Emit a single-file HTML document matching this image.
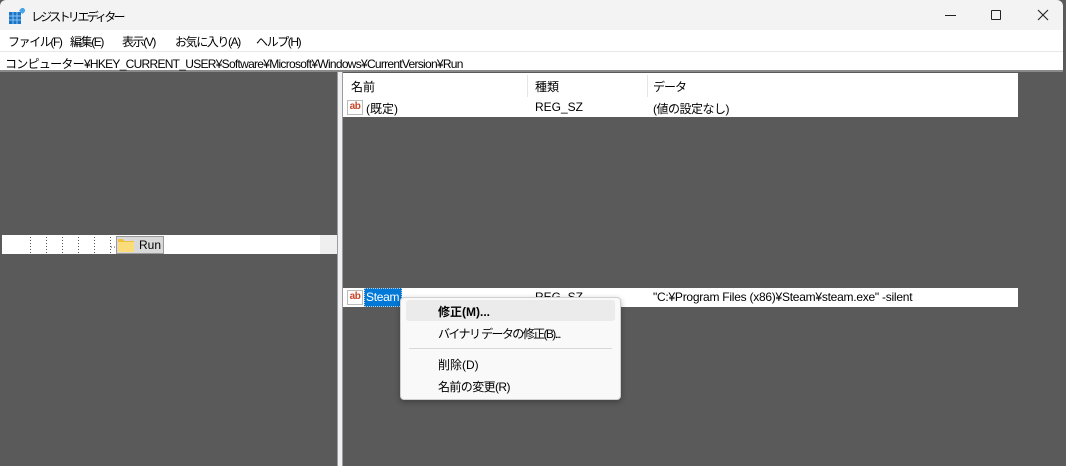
<!DOCTYPE html>
<html><head><meta charset="utf-8"><style>
*{margin:0;padding:0;box-sizing:border-box}
body{width:1066px;height:466px;background:#5a5a5a;position:relative;overflow:hidden;font-family:"Liberation Sans","Noto Sans CJK JP",sans-serif;font-size:12px;color:#000}
.abs{position:absolute}
.title{left:0;top:0;width:1063px;height:30px;background:#f3f3f3;border-top-left-radius:6px;border-top-right-radius:6px}
.menu{left:0;top:30px;width:1063px;height:21px;background:#fff}
.menu span{position:absolute;top:3px;font-size:12px;letter-spacing:-1.4px;white-space:nowrap}
.addr{left:0;top:51px;width:1063px;height:21px;background:#fff;border-top:1px solid #e8e8e8;border-bottom:2px solid #8a8a8a}
.row{background:#fff}
.t{position:absolute;white-space:nowrap}
.ab{position:absolute;width:16px;height:15px;border:1px solid #bbb;background:#fff;color:#c8462a;font-weight:bold;font-size:10px;line-height:12px;text-align:center;letter-spacing:-0.5px}
</style></head><body>
<div class="abs title">
  <svg class="abs" style="left:9px;top:8px" width="16" height="16" viewBox="0 0 16 16">
    <rect x="0" y="4" width="12" height="12" fill="#1a75c9"/>
    <path d="M4 4V16M8 4V16M0 8H12M0 12H12" stroke="#8cc4f0" stroke-width="1"/>
    <rect x="11" y="0" width="5" height="5" fill="#4aa3e8" transform="rotate(45 13.5 2.5)"/>
  </svg>
  <div class="t" style="left:31px;top:8px;font-size:12px;letter-spacing:-2.8px">レジストリ エディター</div>
  <div class="abs" style="left:945px;top:15px;width:11px;height:1px;background:#222"></div>
  <div class="abs" style="left:991px;top:10px;width:10px;height:10px;border:1px solid #222;border-radius:1px"></div>
  <svg class="abs" style="left:1037px;top:9px" width="12" height="12"><path d="M1 1L11 11M11 1L1 11" stroke="#222" stroke-width="1.1"/></svg>
</div>
<div class="abs menu">
  <span style="left:8px">ファイル(F)</span><span style="left:70px">編集(E)</span><span style="left:122px">表示(V)</span><span style="left:175px">お気に入り(A)</span><span style="left:256px">ヘルプ(H)</span>
</div>
<div class="abs addr"><div class="t" style="left:5px;top:3px;letter-spacing:-0.72px">コンピューター¥HKEY_CURRENT_USER¥Software¥Microsoft¥Windows¥CurrentVersion¥Run</div></div>
<!-- splitter -->
<div class="abs" style="left:337px;top:72px;width:6px;height:394px;background:#f0f0f0;border-left:1px solid #9a9aa8;border-right:1px solid #9a9aa8"></div>
<!-- tree row -->
<div class="abs row" style="left:2px;top:235px;width:335px;height:19px"></div>
<div class="abs" style="left:320px;top:235px;width:17px;height:19px;background:#efefef"></div>
<svg class="abs" style="left:0;top:235px" width="120" height="19">
<path d="M30.5 2V19M46.5 2V19M62.5 2V19M78.5 2V19M94.5 2V19M110.5 2V19M111 12H116" stroke="#555" stroke-dasharray="1 2"/>
</svg>
<div class="abs" style="left:116px;top:236px;width:48px;height:18px;background:#d9d9d9;border:1px solid #999"></div>
<svg class="abs" style="left:118px;top:238px" width="16" height="14"><path d="M0 1H5L6.5 3H16V14H0Z" fill="#f0c040"/><rect x="0" y="4" width="16" height="10" fill="#fbdc7a"/></svg>
<div class="t" style="left:139px;top:238px">Run</div>
<!-- list -->
<div class="abs row" style="left:343px;top:73px;width:675px;height:44px"></div>
<div class="abs" style="left:527px;top:75px;width:1px;height:22px;background:#e5e5e5"></div>
<div class="abs" style="left:647px;top:75px;width:1px;height:22px;background:#e5e5e5"></div>
<div class="t" style="left:351px;top:78px">名前</div>
<div class="t" style="left:535px;top:78px">種類</div>
<div class="t" style="left:653px;top:78px;letter-spacing:-1px">データ</div>
<div class="ab" style="left:347px;top:100px">ab</div>
<div class="t" style="left:366px;top:100px">(既定)</div>
<div class="t" style="left:535px;top:100px">REG_SZ</div>
<div class="t" style="left:653px;top:100px;letter-spacing:-0.5px">(値の設定なし)</div>
<div class="abs row" style="left:343px;top:288px;width:675px;height:19px"></div>
<div class="ab" style="left:347px;top:290px">ab</div>
<div class="abs" style="left:364px;top:288px;width:38px;height:19px;background:#0078d7;border:1px dotted #ccc"></div>
<div class="t" style="left:366px;top:290px;color:#fff;letter-spacing:-0.3px">Steam</div>
<div class="t" style="left:535px;top:290px">REG_SZ</div>
<div class="t" style="left:653px;top:290px;letter-spacing:-0.25px">"C:¥Program Files (x86)¥Steam¥steam.exe" -silent</div>
<!-- context menu -->
<div class="abs" style="left:400px;top:297px;width:221px;height:103px;background:#f9f9f9;border:1px solid #d0d0d0;border-radius:4px;box-shadow:0 2px 6px rgba(0,0,0,.3)"></div>
<div class="abs" style="left:406px;top:300px;width:209px;height:21px;background:#ebebeb;border-radius:3px"></div>
<div class="t" style="left:438px;top:303px;font-weight:bold">修正(M)...</div>
<div class="t" style="left:438px;top:325px;letter-spacing:-1.6px">バイナリ データの修正(B)...</div>
<div class="abs" style="left:409px;top:348px;width:203px;height:1px;background:#d8d8d8"></div>
<div class="t" style="left:438px;top:356px">削除(D)</div>
<div class="t" style="left:438px;top:378px;letter-spacing:-0.6px">名前の変更(R)</div>
</body></html>
